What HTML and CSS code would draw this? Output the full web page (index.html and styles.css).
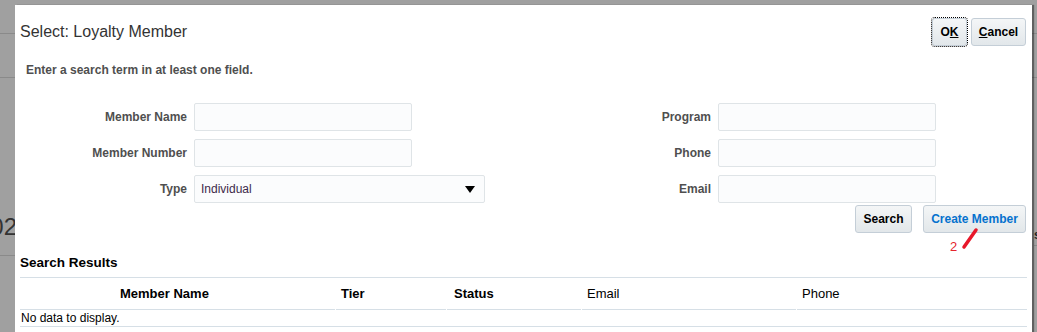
FILE: index.html
```html
<!DOCTYPE html>
<html lang="en">
<head>
    <meta charset="UTF-8">
    <meta name="viewport" content="width=device-width, initial-scale=1.0">
    <title>Select: Loyalty Member</title>
    <link rel="stylesheet" href="styles.css">
</head>
<body>
    <!-- page behind the popup -->
    <div class="backdrop">
        <div class="bg-row bg-row-top"></div>
        <div class="bg-row bg-row-mid"></div>
        <div class="bg-page">
            <div class="bg-left"><span>2302</span></div>
            <div class="bg-right"><span>s</span></div>
        </div>
    </div>

    <div class="dialog">
        <div class="dialog-header">
            <h1 class="dialog-title">Select: Loyalty Member</h1>
            <div class="dialog-actions">
                <button class="btn btn-focus">O<u>K</u></button>
                <button class="btn btn-cancel"><u>C</u>ancel</button>
            </div>
        </div>

        <p class="hint">Enter a search term in at least one field.</p>

        <div class="search-form">
            <div class="form-col form-col-left">
                <label>Member Name</label>
                <input class="field" type="text">
                <label>Member Number</label>
                <input class="field" type="text">
                <label>Type</label>
                <div class="select">
                    <span>Individual</span>
                    <svg width="10" height="7" viewBox="0 0 10 7"><path d="M0 0 H10 L5 7 Z" fill="#000"/></svg>
                </div>
            </div>
            <div class="form-col form-col-right">
                <label>Program</label>
                <input class="field" type="text">
                <label>Phone</label>
                <input class="field" type="text">
                <label>Email</label>
                <input class="field" type="text">
            </div>
        </div>

        <div class="form-buttons">
            <button class="btn btn-search">Search</button>
            <button class="btn btn-link">Create Member</button>
        </div>

        <div class="annotation">
            <span class="annotation-num">2</span>
            <svg width="20" height="24" viewBox="0 0 20 24">
                <line x1="3" y1="21" x2="15" y2="4" stroke="#e8182a" stroke-width="3.5" stroke-linecap="round"/>
            </svg>
        </div>

        <h2 class="results-title">Search Results</h2>
        <div class="results">
            <div class="results-head">
                <div class="col col-name">Member Name</div>
                <div class="col col-tier">Tier</div>
                <div class="col col-status">Status</div>
                <div class="col col-email">Email</div>
                <div class="col col-phone">Phone</div>
            </div>
            <div class="results-empty">No data to display.</div>
        </div>
    </div>
</body>
</html>
```

FILE: styles.css
```css
* {
    box-sizing: border-box;
}
body {
    margin: 0;
    width: 1037px;
    height: 332px;
    overflow: hidden;
    position: relative;
    background: #a0a0a0;
    font-family: "Liberation Sans", Arial, sans-serif;
}

/* background page */
.bg-row {
    border-bottom: 1px solid #8a8a8a;
}
.bg-row-top {
    height: 34px;
}
.bg-row-mid {
    height: 44px;
}
.bg-page {
    display: flex;
    justify-content: space-between;
    align-items: flex-start;
}
.bg-left {
    width: 17px;
    height: 178px;
    padding-top: 137px;
    border-bottom: 1px solid #8a8a8a;
    display: flex;
    justify-content: flex-end;
    overflow: hidden;
    font-size: 24px;
    line-height: 24px;
    color: #333;
    white-space: nowrap;
}
.bg-right {
    width: 3px;
    height: 168px;
    padding-top: 150px;
    border-bottom: 1px solid #8a8a8a;
    overflow: hidden;
    font-size: 12px;
    font-weight: bold;
    line-height: 14px;
    color: #222;
}

/* popup */
.dialog {
    position: absolute;
    left: 15px;
    top: 5px;
    width: 1017px;
    height: 340px;
    padding: 13px 5px 0;
    background: #fff;
    box-shadow: 2px 0 1px rgba(0, 0, 0, 0.4);
}
.dialog-header {
    display: flex;
    justify-content: space-between;
    align-items: center;
    height: 28px;
    padding-right: 1px;
}
.dialog-title {
    margin: 0;
    font-size: 16px;
    font-weight: normal;
    line-height: 18px;
    color: #333;
}
.dialog-actions {
    display: flex;
    gap: 4px;
}
.btn {
    height: 28px;
    padding: 0;
    border: 1px solid #c4ced7;
    border-radius: 3px;
    background: linear-gradient(#f4f6f7, #e2e7ea);
    font-family: inherit;
    font-size: 12px;
    font-weight: bold;
    color: #000;
    cursor: pointer;
}
.btn-focus {
    outline: 1px dotted #000;
    outline-offset: 0;
    width: 35px;
}
.btn-cancel {
    width: 55px;
}
.btn-search {
    width: 57px;
}
.btn-link {
    width: 103px;
    color: #0572ce;
}

.hint {
    margin: 17px 0 0 6px;
    font-size: 12px;
    font-weight: bold;
    line-height: 14px;
    color: #4f4f4f;
}

.search-form {
    display: flex;
    margin-top: 26px;
}
.form-col {
    display: grid;
    grid-template-columns: 167px auto;
    column-gap: 7px;
    row-gap: 8px;
    align-items: center;
    justify-items: start;
}
.form-col-left {
    width: 580px;
}
.form-col-right {
    grid-template-columns: 111px auto;
}
.form-col label {
    justify-self: end;
    font-size: 12px;
    font-weight: bold;
    color: #4f4f4f;
}
.field {
    width: 218px;
    height: 28px;
    margin: 0;
    border: 1px solid #dfe4e7;
    border-radius: 2px;
    background: #fbfcfd;
}
.select {
    width: 291px;
    height: 28px;
    padding: 0 9px 0 6px;
    border: 1px solid #dfe4e7;
    border-radius: 2px;
    background: #fbfcfd;
    display: flex;
    justify-content: space-between;
    align-items: center;
    font-size: 12px;
    color: #3e2a4a;
}

.form-buttons {
    display: flex;
    justify-content: flex-end;
    gap: 11px;
    margin-top: 2px;
    padding-right: 1px;
}

.annotation {
    position: absolute;
    left: 935px;
    top: 221px;
    display: flex;
    align-items: flex-start;
}
.annotation-num {
    margin-top: 13px;
    font-size: 13px;
    line-height: 16px;
    color: #e5242c;
}
.annotation svg {
    margin-left: 4px;
}

.results-title {
    margin: 22px 0 0;
    padding-bottom: 6px;
    border-bottom: 1px solid #d6dfe6;
    font-size: 13.5px;
    line-height: 16px;
    color: #000;
}
.results-head {
    display: grid;
    grid-template-columns: 315px 110px 134px 214px 1fr;
    column-gap: 1px;
}
.col {
    height: 32px;
    padding-left: 5px;
    border-bottom: 1px solid #d6dfe6;
    font-size: 13px;
    line-height: 31px;
    color: #000;
}
.col-name {
    padding-left: 100px;
    font-weight: bold;
}
.col-tier,
.col-status {
    font-weight: bold;
}
.col-status {
    padding-left: 7px;
}
.results-empty {
    height: 17px;
    padding-left: 1px;
    border-bottom: 1px solid #d6dfe6;
    font-size: 12px;
    line-height: 16px;
    color: #000;
}
```
